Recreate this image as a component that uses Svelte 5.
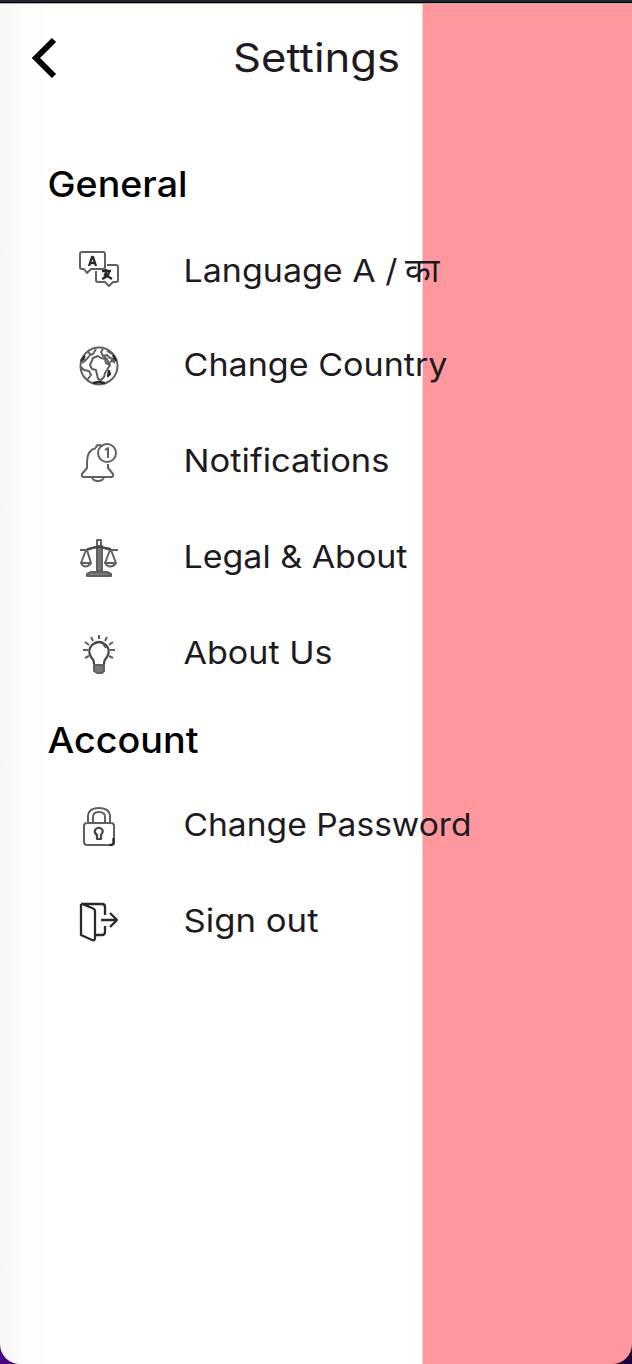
<script>
  const sections = [
    { title: 'General', width: 140, rows: [
      { icon: 'language', label: 'Language A /', width: 214, extra: 'का' },
      { icon: 'globe', label: 'Change Country', width: 264 },
      { icon: 'bell', label: 'Notifications', width: 206 },
      { icon: 'scales', label: 'Legal & About', width: 224 },
      { icon: 'bulb', label: 'About Us', width: 149 }
    ] },
    { title: 'Account', width: 151, rows: [
      { icon: 'lock', label: 'Change Password', width: 288 },
      { icon: 'exit', label: 'Sign out', width: 135 }
    ] }
  ];
</script>

<main>
  <div class="screen">
    <header>
      <svg class="back" viewBox="0 0 28 42" role="img" aria-label="Back"><path d="M24 3 6 21l18 18" /></svg>
      <svg class="title" viewBox="0 0 180 60"><text x="0" y="44" textLength="167" lengthAdjust="spacingAndGlyphs">Settings</text></svg>
    </header>
    {#each sections as section}
      <section>
        <h2><svg viewBox="0 0 240 60"><text x="-.5" y="44.5" textLength={section.width} lengthAdjust="spacingAndGlyphs">{section.title}</text></svg></h2>
        <ul>
          {#each section.rows as row}
            <li>
              <svg class="icon" class:raised={row.icon === 'language'} viewBox="0 0 40 40">
                {#if row.icon === 'language'}
                  <path d="M3 3h21q2 0 2 2v13q0 2-2 2H12l-4 4-3-4H3q-2 0-2-2V5q0-2 2-2Z" />
                  <path d="M28 16h9q2 0 2 2v13q0 2-2 2h-3l-4 4-4-4h-7q-2 0-2-2V22" />
                  <path class="heavy" d="m10 17 3-9h1l3 9m-6-3h5M23 22h9m-5-2v3q0 6-4 7m7-8q0 5-5 7m0-4 8 5" />
                {:else if row.icon === 'globe'}
                  <circle cx="20" cy="20" r="18.5" />
                  <path d="m14 12 5-2 3 2 4 1 1 4 4 2-3 5-2 3-1 4-3 3-3-1-2-9-4-1-2-4Z" />
                  <path d="m3 13 4 1 4-5 3-1 3-5M9 6l3 3m12-6-2 3 2 4 4-1 3 3 6 2M24 10l4 3 2 5 3-4 3 3M2 21l3 3 5 1 2 4-4 5M3 17l4-3M28 5l5 3" />
                  <path class="heavy" d="m30 25-1 5 2-2ZM14 37l6-1 6 1M2 15l4-5M34 9l3 6" />
                {:else if row.icon === 'bell'}
                  <path d="M17 6q0-3 3-3t3 2m-6 1Q8 8 8 20v6l-5 6q-1 3 2 3h27q3 0 2-3l-5-6v-4M13 35q1 4 6 4t6-4" />
                  <circle cx="28" cy="11" r="9" />
                  <path d="m26 8 3-2v10" />
                {:else if row.icon === 'scales'}
                  <path class="solid" d="M18 8h5v25h-5ZM8 38v-2l4-2h16l4 2v2Z" />
                  <path d="M18 2h4v6h-4ZM1 12h7l11-4 12 4h8M7 12 2 25q4 7 10 0L8 12m23 0-5 13q5 7 11 0l-5-13M2 25h10m14 0h11" />
                  <path class="beam" d="m8 11 11-2h3l10 2" />
                {:else if row.icon === 'bulb'}
                  <path class="beam" d="M15 30q0-4-3-7-4-7 1-12 7-6 14 0 5 5 1 12-3 3-3 7" />
                  <path class="solid" d="M15 31h10v6l-2 2h-5l-3-2Z" />
                  <path d="M20 1v4M12 3l2 4m14-4-2 4M6 8l4 3m24-3-4 3M4 16h5m22 0h5M6 24l4-2m24 2-4-2M24 10l3 4" />
                {:else if row.icon === 'lock'}
                  <path d="M9 17v-6Q9 2 20 2t11 9v6m-17 0v-6q0-5 6-5t6 5v6M8 17h24q3 0 3 3v16q0 3-3 3H8q-3 0-3-3V20q0-3 3-3Z" />
                  <path class="beam" d="M18 29q-3-2-2-5 2-3 5-2 5 2 1 7v4h-4Z" />
                  <path class="heavy" d="M34.5 32v5q0 2-4 2" />
                {:else}
                  <path class="heavy" d="M2 2h21q3 0 3 3v8m0 11v6q0 3-3 3h-6M2 2v31l11 5q3 1 3-2V9q0-2-3-3L3 2M22 18h16m-7-7 7 7-7 7" />
                {/if}
              </svg>
              <svg class="label" viewBox="0 0 360 60">
                <text x="-.5" y={row.extra ? 42 : 40} textLength={row.width} lengthAdjust="spacingAndGlyphs">{row.label}</text>
                {#if row.extra}<text class="hindi" x="221" y="42">{row.extra}</text>{/if}
              </svg>
            </li>
          {/each}
        </ul>
      </section>
    {/each}
  </div>
</main>

<style>
  :global(body) { background: #1d0045; }
  main {
    box-sizing: border-box;
    width: 632px;
    height: 1364px;
    padding-top: 3px;
    background: linear-gradient(#25232f 0 2px, #000 2px 3px, transparent 3px), linear-gradient(90deg, #4b0783, #1b003f);
  }
  .screen {
    box-sizing: border-box;
    height: 1361px;
    overflow: hidden;
    border-top: 1px solid #b9aaa9;
    border-radius: 0 0 20px 20px;
    background: linear-gradient(90deg, #f7f7f7 0, #fcfcfc 25px, #fefefe 43px, #fff 44px, #fff 422px, #ffcfd2 422px, #ffcfd2 423px, #ff979f 423px);
  }
  header { display: flex; height: 134px; }
  svg { display: block; overflow: visible; fill: none; }
  text { fill: #1d1b1f; font: 31.5px Inter, "Noto Sans", sans-serif; }
  .back { width: 28px; height: 42px; margin: 33px 0 0 30px; stroke: #000; stroke-width: 6; }
  .title { width: 180px; height: 60px; margin: 24px 0 0 175px; }
  .title text { font-size: 39.5px; }
  h2 { height: 84px; margin: 0; padding: 14px 0 0 48px; box-sizing: border-box; }
  h2 svg { width: 240px; height: 60px; }
  h2 text { fill: #000; font-size: 35.5px; font-weight: 500; }
  section + section h2 { height: 76px; padding-top: 6px; }
  ul { margin: 0; padding: 0; list-style: none; }
  li { display: flex; align-items: center; gap: 65px; height: 96px; padding-left: 79px; }
  .icon { width: 40px; height: 40px; flex: none; stroke: #606060; stroke-width: 2; stroke-linejoin: round; }
  .raised { margin-bottom: 2px; }
  .beam { stroke: #444; stroke-width: 2.2; }
  .heavy { stroke: #292929; stroke-width: 2.3; }
  .solid { fill: #777; }
  .label { width: 360px; height: 60px; flex: none; }
  .hindi { font-family: "Noto Sans Devanagari", "Noto Sans", sans-serif; font-size: 33.5px; }
</style>
